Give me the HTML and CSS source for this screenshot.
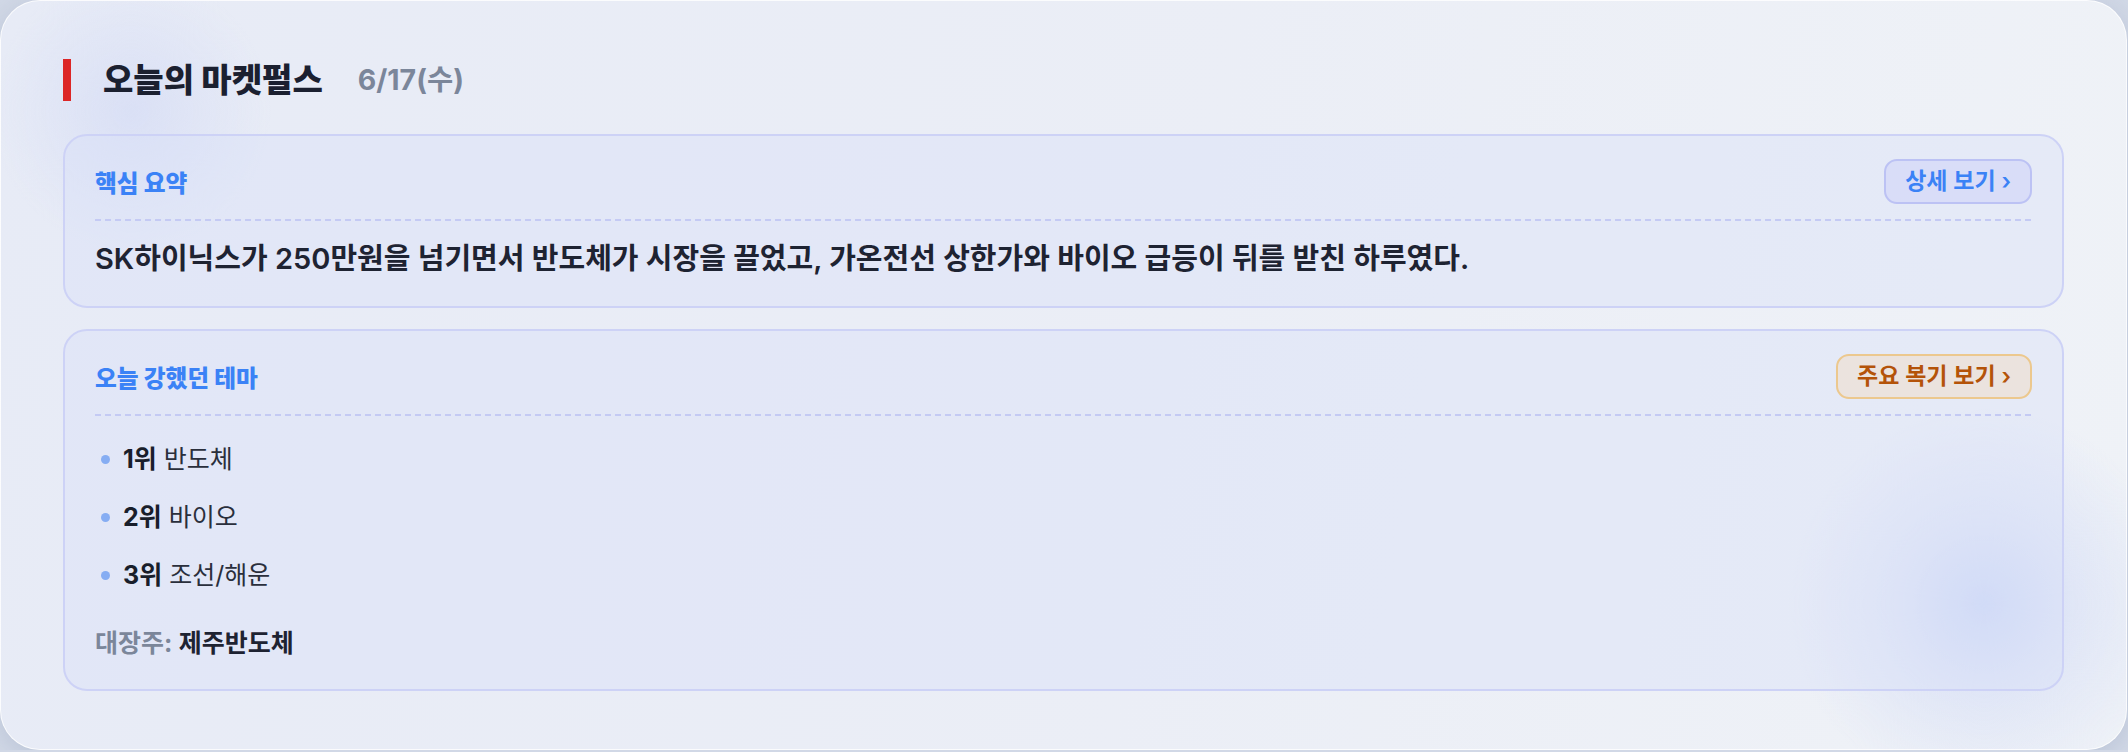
FILE: index.html
```html
<!DOCTYPE html>
<html lang="ko">
<head>
    <meta charset="UTF-8">
    <meta name="viewport" content="width=device-width, initial-scale=1.0">
    <title>오늘의 마켓펄스</title>
    <link rel="stylesheet" href="styles.css">
</head>
<body>
    <div class="pulse-card">
        <div class="pulse-header">
            <span class="accent-bar"></span>
            <h1 class="pulse-title">오늘의 마켓펄스</h1>
            <span class="pulse-date">6/17(수)</span>
        </div>

        <section class="panel">
            <div class="panel-head">
                <h2 class="panel-title">핵심 요약</h2>
                <button class="more-btn">상세 보기 ›</button>
            </div>
            <p class="summary">SK하이닉스가 250만원을 넘기면서 반도체가 시장을 끌었고, 가온전선 상한가와 바이오 급등이 뒤를 받친 하루였다.</p>
        </section>

        <section class="panel">
            <div class="panel-head">
                <h2 class="panel-title">오늘 강했던 테마</h2>
                <button class="more-btn more-btn-amber">주요 복기 보기 ›</button>
            </div>
            <ul class="theme-list">
                <li><strong>1위</strong> 반도체</li>
                <li><strong>2위</strong> 바이오</li>
                <li><strong>3위</strong> 조선/해운</li>
            </ul>
            <p class="leader"><span class="leader-label">대장주:</span> 제주반도체</p>
        </section>
    </div>
</body>
</html>
```

FILE: styles.css
```css
body {
    margin: 0;
    padding: 0;
    background-color: #d1d8e6;
    font-family: "Inter", "Noto Sans CJK KR", sans-serif;
    color: #1e2332;
}
.pulse-card {
    box-sizing: border-box;
    width: 2127px;
    padding: 58px 62px 58px;
    border-radius: 40px;
    border: 1px solid rgba(255, 255, 255, 0.8);
    background:
        radial-gradient(circle at 1983px 603px, rgba(198, 211, 246, 0.85) 0, rgba(210, 219, 246, 0.5) 90px, rgba(225, 231, 246, 0) 195px),
        radial-gradient(circle at 130px 110px, rgba(212, 219, 245, 0.7) 0, rgba(212, 219, 245, 0) 140px),
        linear-gradient(100deg, #e7ebf6 0%, #ebeef6 55%, #eff2f7 100%);
    box-shadow: 0 6px 24px rgba(90, 110, 150, 0.18);
}
.pulse-header {
    display: flex;
    align-items: center;
    height: 42px;
    margin-bottom: 33px;
}
.accent-bar {
    width: 8px;
    height: 42px;
    background-color: #dc2626;
    margin-right: 32px;
}
.pulse-title {
    margin: 0;
    font-size: 33px;
    font-weight: 800;
    line-height: 42px;
    color: #1b2030;
}
.pulse-date {
    margin-left: 35px;
    font-size: 28.5px;
    font-weight: 700;
    line-height: 42px;
    color: #7b869a;
}
.panel {
    border: 2px solid #cdd2f6;
    border-radius: 24px;
    background-color: rgba(218, 224, 248, 0.42);
    padding: 23px 30px 29px;
}
.panel + .panel {
    margin-top: 21px;
}
.panel-head {
    display: flex;
    justify-content: space-between;
    align-items: center;
    padding-bottom: 15px;
    position: relative;
}
.panel-head::after {
    content: "";
    position: absolute;
    left: 0;
    right: 0;
    bottom: -2px;
    height: 2px;
    background: repeating-linear-gradient(90deg, #c4caf4 0 6px, transparent 6px 10px);
}
.panel-title {
    margin: 0;
    font-size: 23.7px;
    font-weight: 800;
    color: #3b82f6;
}
.more-btn {
    font-family: inherit;
    font-size: 23px;
    font-weight: 600;
    line-height: 25px;
    padding: 8px 19px;
    border: 2px solid #bcc2f4;
    border-radius: 13px;
    background-color: #d9ddf8;
    color: #3b82f6;
    cursor: pointer;
}
.more-btn-amber {
    background-color: #ebe3de;
    border-color: #ecc88e;
    color: #b45309;
}
.summary {
    margin: 22px 0 0;
    font-size: 29px;
    font-weight: 600;
    line-height: 36px;
    color: #1e2332;
}
.theme-list {
    list-style: none;
    margin: 28px 0 0;
    padding: 0;
    display: flex;
    flex-direction: column;
    gap: 24px;
}
.theme-list li {
    display: flex;
    align-items: center;
    font-size: 25px;
    line-height: 34px;
    color: #2a2f3c;
}
.theme-list li::before {
    content: "";
    width: 9px;
    height: 9px;
    border-radius: 50%;
    background-color: #86adf3;
    margin: 0 13px 0 6px;
}
.theme-list strong {
    font-weight: 700;
    color: #191e2b;
    margin-right: 7px;
}
.leader {
    margin: 34px 0 0;
    font-size: 25px;
    font-weight: 600;
    line-height: 34px;
    color: #1e2332;
}
.leader-label {
    font-weight: 700;
    color: #7b869a;
}
```
